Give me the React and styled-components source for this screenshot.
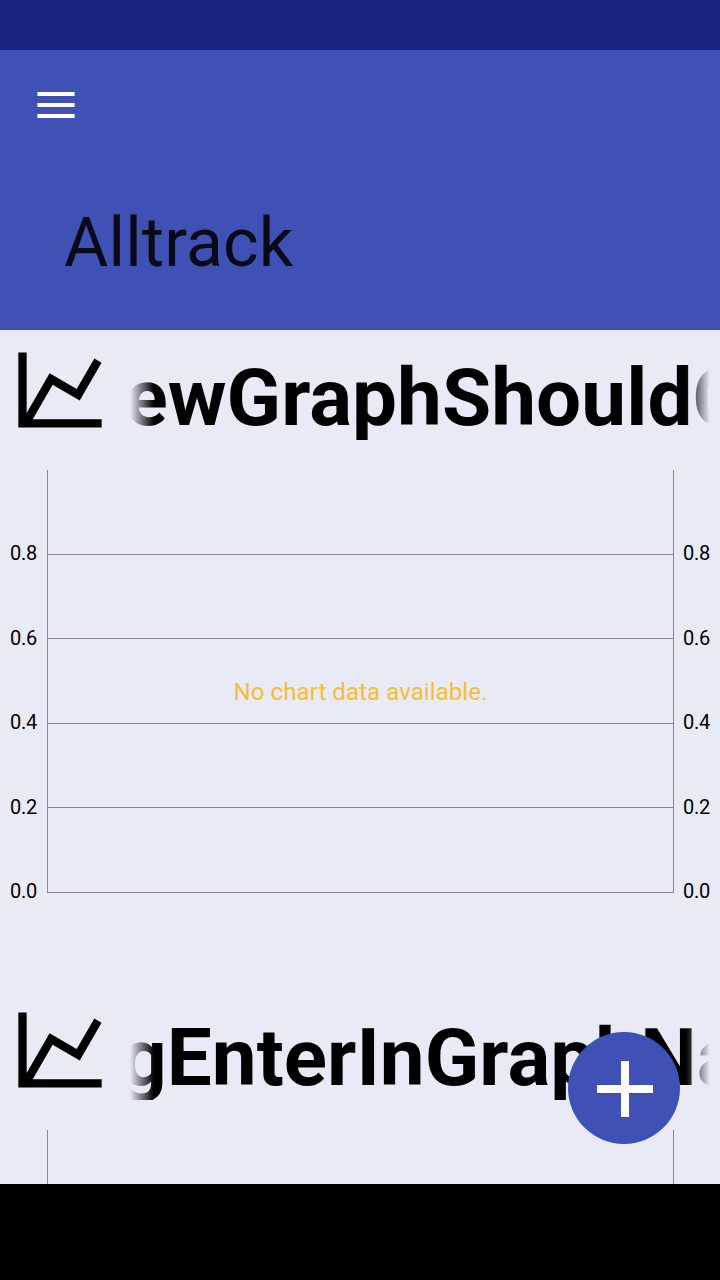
import React from "react";
import styled, { createGlobalStyle } from "styled-components";

const GlobalStyle = createGlobalStyle`
  * { box-sizing: border-box; }
  body { margin: 0; background: #000; font-family: Roboto, "Liberation Sans", sans-serif; }
`;

const Screen = styled.div`
  position: relative;
  display: flex;
  flex-direction: column;
  width: 720px;
  height: 1280px;
  overflow: hidden;
  background: #000;
`;

const StatusBar = styled.div`
  flex: none;
  height: 50px;
  background: #1a237e;
`;

const AppBar = styled.header`
  flex: none;
  display: flex;
  flex-direction: column;
  align-items: flex-start;
  justify-content: space-between;
  height: 280px;
  padding: 42px 64px 47px 37px;
  background: #3f51b5;
`;

const MenuButton = styled.button`
  padding: 0;
  border: 0;
  background: none;
`;

const MenuIcon = styled.svg`
  display: block;
  width: 38px;
  height: 26px;
`;

const Title = styled.h1`
  margin: 0 0 0 27px;
  font-size: 68px;
  line-height: 80px;
  font-weight: 400;
  letter-spacing: 0.12px;
  color: rgba(0, 0, 0, 0.87);
`;

const GraphList = styled.main`
  flex: none;
  height: 854px;
  overflow: hidden;
  background: #e8eaf6;
`;

const GraphItem = styled.section`
  height: 660px;
  padding: 10px;
`;

const GraphHeader = styled.div`
  display: flex;
  gap: 20px;
  height: 100px;
`;

const GraphIcon = styled.svg`
  flex: none;
  width: 100px;
  height: 100px;
`;

const Marquee = styled.div`
  flex: 1;
  min-width: 0;
  overflow: hidden;
  mask-image: linear-gradient(to right, transparent, #000 24px, #000 calc(100% - 24px), transparent);
`;

const GraphName = styled.h2`
  margin: 11px 0 0;
  text-indent: ${(p) => p.$scroll}px;
  white-space: nowrap;
  font-size: 80px;
  line-height: 94px;
  font-weight: 700;
  letter-spacing: 0.05px;
  color: #000;
`;

const Chart = styled.div`
  display: grid;
  grid-template-columns: 27px 627px 27px;
  column-gap: 10px;
  height: 423px;
  margin-top: 30px;
`;

const Axis = styled.div`
  display: flex;
  flex-direction: column;
  height: 423px;
  padding-top: 41px;
  margin-left: ${(p) => p.$shift}px;
  white-space: nowrap;
  font-size: 20px;
  letter-spacing: -0.3px;
  color: #000;
`;

const AxisLabel = styled.span`
  flex: none;
  height: ${(p) => p.$height}px;
  line-height: 84px;
`;

const Plot = styled.div`
  position: relative;
  grid-column: 2;
  display: flex;
  flex-direction: column;
  height: 423px;
  border: solid #888888;
  border-width: 0 1px;
`;

const Band = styled.div`
  flex: none;
  height: ${(p) => p.$height}px;
  border-bottom: 1px solid #888888;
`;

const EmptyMessage = styled.p`
  position: absolute;
  inset: 208px 0 auto;
  margin: 0;
  text-align: center;
  font-size: 24px;
  line-height: 28px;
  letter-spacing: 0.08px;
  color: #f7bd33;
`;

const AddButton = styled.button`
  position: absolute;
  right: 40px;
  bottom: 136px;
  width: 112px;
  height: 112px;
  padding: 0;
  border: 0;
  border-radius: 50%;
  background: #3f51b5;
`;

const AddIcon = styled.svg`
  display: block;
  width: 112px;
  height: 112px;
`;

const ticks = [
  { label: "0.8", height: 85 },
  { label: "0.6", height: 84 },
  { label: "0.4", height: 85 },
  { label: "0.2", height: 84 },
  { label: "0.0", height: 44 },
];
const bands = [85, 84, 85, 84, 85];

function Ticks({ shift = 0 }) {
  return (
    <Axis $shift={shift}>
      {ticks.map((t) => (
        <AxisLabel key={t.label} $height={t.height}>
          {t.label}
        </AxisLabel>
      ))}
    </Axis>
  );
}

// A peeking graph is mostly below the fold, so only its frame is rendered.
function Graph({ name, scroll, peek }) {
  return (
    <GraphItem>
      <GraphHeader>
        <GraphIcon viewBox="0 0 24 24">
          <path d="M16 11.78L20.24 4.45L21.97 5.45L16.74 14.5L10.23 10.75L5.46 19H22V21H2V3H4V17.54L9.5 8L16 11.78Z" />
        </GraphIcon>
        <Marquee>
          <GraphName $scroll={scroll}>{name}</GraphName>
        </Marquee>
      </GraphHeader>
      <Chart>
        {!peek && <Ticks />}
        <Plot>
          {bands.map((h, i) => (
            <Band key={i} $height={h} />
          ))}
          {!peek && <EmptyMessage>No chart data available.</EmptyMessage>}
        </Plot>
        {!peek && <Ticks shift={-1} />}
      </Chart>
    </GraphItem>
  );
}

export default function App() {
  return (
    <Screen>
      <GlobalStyle />
      <StatusBar />
      <AppBar>
        <MenuButton aria-label="Menu">
          <MenuIcon viewBox="0 0 38 26" fill="#fff">
            <path d="M.4 0h37.2v4H.4zM.4 11h37.2v4H.4zM.4 22h37.2v4H.4z" />
          </MenuIcon>
        </MenuButton>
        <Title>Alltrack</Title>
      </AppBar>
      <GraphList>
        <Graph name="ewGraphShouldC" scroll={-5.5} />
        <Graph name="gEnterInGraphNa" scroll={-9} peek />
      </GraphList>
      <AddButton aria-label="Add graph">
        <AddIcon viewBox="0 0 112 112" fill="#fff">
          <path d="M53 29h8v24h24v8H61v24h-8V61H29v-8h24z" />
        </AddIcon>
      </AddButton>
    </Screen>
  );
}
